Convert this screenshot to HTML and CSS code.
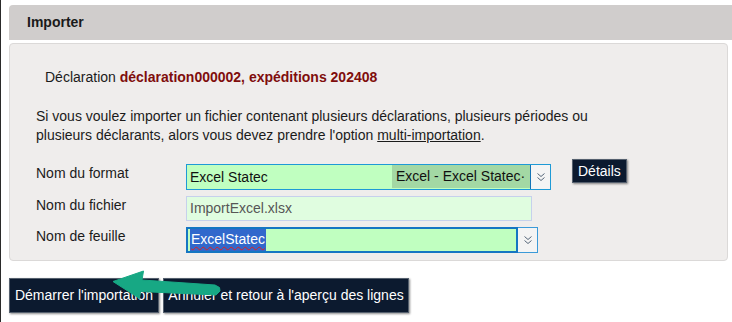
FILE: index.html
```html
<!DOCTYPE html>
<html lang="fr">
<head>
<meta charset="utf-8">
<title>Importer</title>
<link rel="stylesheet" href="styles.css">
</head>
<body>
<div class="page">
  <div class="header">Importer</div>
  <div class="panel">
    <div class="decl">Déclaration <b class="dark-red">déclaration000002, expéditions 202408</b></div>
    <p class="info">Si vous voulez importer un fichier contenant plusieurs déclarations, plusieurs périodes ou<br>plusieurs déclarants, alors vous devez prendre l'option <a class="link" href="#">multi-importation</a>.</p>
    <div class="form">
      <div class="row">
        <div class="label">Nom du format</div>
        <div class="select select-format">
          <span class="sel-text">Excel Statec</span>
          <span class="sel-hint">Excel - Excel Statec·</span>
          <span class="sel-btn">
            <svg class="chev" viewBox="0 0 10 10" width="10" height="10"><polyline points="1.5,1.5 5,4.5 8.5,1.5"/><polyline points="1.5,5.5 5,8.5 8.5,5.5"/></svg>
          </span>
        </div>
        <button class="btn btn-small">Détails</button>
      </div>
      <div class="row">
        <div class="label">Nom du fichier</div>
        <div class="input-file">ImportExcel.xlsx</div>
      </div>
      <div class="row">
        <div class="label">Nom de feuille</div>
        <div class="select-sheet">
          <div class="sheet-field"><span class="selected">ExcelStatec</span></div>
          <span class="sheet-btn">
            <svg class="chev" viewBox="0 0 10 10" width="10" height="10"><polyline points="1.5,1.5 5,4.5 8.5,1.5"/><polyline points="1.5,5.5 5,8.5 8.5,5.5"/></svg>
          </span>
        </div>
      </div>
    </div>
  </div>
  <div class="actions">
    <button class="btn btn-large btn-start">Démarrer l'importation</button>
    <button class="btn btn-large btn-cancel">Annuler et retour à l'aperçu des lignes</button>
  </div>
  <svg class="arrow" width="732" height="322" viewBox="0 0 732 322">
    <polygon points="113,281.5 143.5,271 142,280 215,285 219.5,287.5 220,291 216,295 140.5,291.5 139.5,298.5"/>
  </svg>
</div>
</body>
</html>
```
FILE: styles.css
```css
html, body {
  margin: 0;
  padding: 0;
  background: #ffffff;
}
body {
  font-family: "Liberation Sans", Arial, sans-serif;
  font-size: 14px;
  color: #1b1b1b;
}
.page {
  position: relative;
  width: 731px;
  height: 322px;
  border-left: 1px solid #2a2a2a;
  overflow: hidden;
}
.header {
  margin: 5px 0 0 8px;
  height: 35px;
  line-height: 35px;
  padding-left: 18px;
  background: #d0cdcc;
  border-radius: 4px 0 0 0;
  font-weight: bold;
  color: #1a1a1a;
}
.panel {
  margin: 3px 4px 0 8px;
  padding: 24px 26px 7px 26px;
  background: #efedec;
  border: 1px solid #dbd9d8;
  border-radius: 4px;
}
.decl {
  margin-left: 9px;
  line-height: 19px;
}
.dark-red {
  color: #7f0d0d;
}
.info {
  margin: 20px 0 0 0;
  line-height: 19px;
}
.link {
  color: #1b1b1b;
  text-decoration: underline;
}
.form {
  margin-top: 19px;
}
.row {
  display: flex;
  align-items: flex-start;
  margin-bottom: 6px;
}
.row:last-child {
  margin-bottom: 0;
}
.label {
  width: 150px;
  line-height: 19px;
}
.select {
  display: flex;
  width: 363px;
  height: 24px;
  border: 1px solid #1e9ad6;
  background: #c0ffc0;
}
.sel-text {
  width: 202px;
  padding-left: 3px;
  line-height: 24px;
  color: #111;
}
.sel-hint {
  width: 134px;
  height: 23px;
  padding-left: 4px;
  background: #a3d8a4;
  line-height: 23px;
  color: #111;
  overflow: hidden;
  white-space: nowrap;
}
.sel-btn {
  width: 19px;
  border-left: 1px solid #1473b5;
  background: #f4f4f4;
  display: flex;
  align-items: center;
  justify-content: center;
}
.chev {
  fill: none;
  stroke: #56677a;
  stroke-width: 1;
}
.btn {
  font-family: "Liberation Sans", Arial, sans-serif;
  background: #0c1a2f;
  color: #ffffff;
  border: 1px solid #55606e;
  box-shadow: 1px 1px 2px rgba(0, 0, 0, 0.45);
  border-radius: 0;
  cursor: pointer;
  white-space: nowrap;
}
.btn-small {
  margin: -5px 0 0 21px;
  height: 24px;
  padding: 0 5px;
  font-size: 14px;
}
.input-file {
  width: 341px;
  height: 23px;
  padding-left: 3px;
  line-height: 23px;
  border: 1px solid #c6d1ec;
  background: #e0fde0;
  color: #565656;
}
.select-sheet {
  display: flex;
  height: 26px;
}
.sheet-field {
  width: 326px;
  height: 22px;
  border: 2px solid #1576c2;
  background: #c0ffc0;
  padding-left: 2px;
  display: flex;
  align-items: stretch;
}
.selected {
  background: #3168cc;
  color: #ffffff;
  padding: 0 1px;
  line-height: 21px;
  text-decoration: underline wavy #e02020;
  text-decoration-thickness: 1px;
  text-underline-offset: 2px;
}
.sheet-btn {
  width: 19px;
  height: 24px;
  border: 1px solid #3b9ad8;
  border-left: none;
  background: #f4f4f4;
  display: flex;
  align-items: center;
  justify-content: center;
}
.actions {
  display: flex;
  gap: 4px;
  margin: 17px 0 0 8px;
}
.btn-large {
  height: 35px;
  padding: 0;
  font-size: 14px;
  line-height: 33px;
  text-align: center;
  overflow: hidden;
}
.btn-start {
  width: 150px;
}
.btn-cancel {
  width: 246px;
}
.arrow {
  position: absolute;
  left: -1px;
  top: 0;
  pointer-events: none;
}
.arrow polygon {
  fill: #17a884;
  stroke: #17a884;
  stroke-width: 1;
  stroke-linejoin: round;
}
```
